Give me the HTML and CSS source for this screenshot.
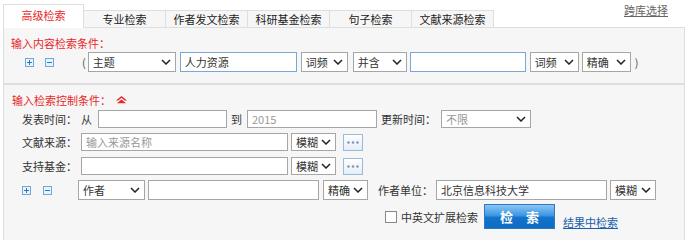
FILE: index.html
```html
<!DOCTYPE html>
<html lang="zh">
<head>
<meta charset="utf-8">
<link rel="stylesheet" href="styles.css">
</head>
<body>
<div class="page">
  <div class="tabbar">
    <div class="tabs">
      <div class="tab active">高级检索</div>
      <div class="tab">专业检索</div>
      <div class="tab">作者发文检索</div>
      <div class="tab">科研基金检索</div>
      <div class="tab">句子检索</div>
      <div class="tab">文献来源检索</div>
    </div>
    <a class="crossdb">跨库选择</a>
  </div>

  <div class="panel p1">
    <div class="title">输入内容检索条件：</div>
    <div class="row r-content">
      <span class="ico plus m25"><svg width="9" height="9" viewBox="0 0 9 9"><path d="M2 4.5h5M4.5 2v5" stroke="#2a79c4" stroke-width="1"/></svg></span>
      <span class="ico minus m11"><svg width="9" height="9" viewBox="0 0 9 9"><path d="M2 4.5h5" stroke="#2a79c4" stroke-width="1"/></svg></span>
      <span class="paren m28">(</span>
      <div class="sel w88 m2 h20"><span>主题</span><svg class="chev" width="10" height="6" viewBox="0 0 10 6"><path d="M1 1l4 4 4-4" fill="none" stroke="#222" stroke-width="1.5"/></svg></div>
      <div class="inp blue w117 m4 h20">人力资源</div>
      <div class="sel w47 m4 h20"><span>词频</span><svg class="chev" width="10" height="6" viewBox="0 0 10 6"><path d="M1 1l4 4 4-4" fill="none" stroke="#222" stroke-width="1.5"/></svg></div>
      <div class="sel w54 m5 h20"><span>并含</span><svg class="chev" width="10" height="6" viewBox="0 0 10 6"><path d="M1 1l4 4 4-4" fill="none" stroke="#222" stroke-width="1.5"/></svg></div>
      <div class="inp blue w116 m3 h20"></div>
      <div class="sel w49 m4 h20"><span>词频</span><svg class="chev" width="10" height="6" viewBox="0 0 10 6"><path d="M1 1l4 4 4-4" fill="none" stroke="#222" stroke-width="1.5"/></svg></div>
      <div class="sel w49 m3 h20"><span>精确</span><svg class="chev" width="10" height="6" viewBox="0 0 10 6"><path d="M1 1l4 4 4-4" fill="none" stroke="#222" stroke-width="1.5"/></svg></div>
      <span class="paren m4">)</span>
    </div>
  </div>

  <div class="panel p2">
    <div class="title t2">输入检索控制条件：<svg class="up" width="11" height="8" viewBox="0 0 11 8"><path d="M5.5 0L11 4.5H8.6L5.5 1.8 2.4 4.5H0z" fill="#e8262a"/><path d="M5.5 3.4L10 7.2H1z" fill="#e8262a"/></svg></div>

    <div class="row r-time">
      <span class="lbl">发表时间：</span>
      <span class="txt">从</span>
      <div class="inp w129 m6 h18"></div>
      <span class="txt m4">到</span>
      <div class="inp w130 m5 h18 gray">2015</div>
      <span class="txt m4">更新时间：</span>
      <div class="sel w90 m5 h18"><span class="gray">不限</span><svg class="chev" width="10" height="6" viewBox="0 0 10 6"><path d="M1 1l4 4 4-4" fill="none" stroke="#222" stroke-width="1.5"/></svg></div>
    </div>

    <div class="row r-src">
      <span class="lbl">文献来源：</span>
      <div class="inp w207 h18 gray">输入来源名称</div>
      <div class="sel w45 m3 h18"><span>模糊</span><svg class="chev" width="10" height="6" viewBox="0 0 10 6"><path d="M1 1l4 4 4-4" fill="none" stroke="#222" stroke-width="1.5"/></svg></div>
      <div class="dots m7"><svg width="12" height="3" viewBox="0 0 12 3"><circle cx="1.5" cy="1.5" r="1.2" fill="#7d97b3"/><circle cx="6" cy="1.5" r="1.2" fill="#7d97b3"/><circle cx="10.5" cy="1.5" r="1.2" fill="#7d97b3"/></svg></div>
    </div>

    <div class="row r-fund">
      <span class="lbl">支持基金：</span>
      <div class="inp w207 h18"></div>
      <div class="sel w45 m3 h18"><span>模糊</span><svg class="chev" width="10" height="6" viewBox="0 0 10 6"><path d="M1 1l4 4 4-4" fill="none" stroke="#222" stroke-width="1.5"/></svg></div>
      <div class="dots m7"><svg width="12" height="3" viewBox="0 0 12 3"><circle cx="1.5" cy="1.5" r="1.2" fill="#7d97b3"/><circle cx="6" cy="1.5" r="1.2" fill="#7d97b3"/><circle cx="10.5" cy="1.5" r="1.2" fill="#7d97b3"/></svg></div>
    </div>

    <div class="row r-author">
      <span class="ico plus"><svg width="9" height="9" viewBox="0 0 9 9"><path d="M2 4.5h5M4.5 2v5" stroke="#2a79c4" stroke-width="1"/></svg></span>
      <span class="ico minus m12"><svg width="9" height="9" viewBox="0 0 9 9"><path d="M2 4.5h5" stroke="#2a79c4" stroke-width="1"/></svg></span>
      <div class="sel w67 m26 h20"><span>作者</span><svg class="chev" width="10" height="6" viewBox="0 0 10 6"><path d="M1 1l4 4 4-4" fill="none" stroke="#222" stroke-width="1.5"/></svg></div>
      <div class="inp w171 m3 h20"></div>
      <div class="sel w45 m4 h20"><span>精确</span><svg class="chev" width="10" height="6" viewBox="0 0 10 6"><path d="M1 1l4 4 4-4" fill="none" stroke="#222" stroke-width="1.5"/></svg></div>
      <span class="txt m10">作者单位：</span>
      <div class="inp w171 m3 h20">北京信息科技大学</div>
      <div class="sel w46 m3 h20"><span>模糊</span><svg class="chev" width="10" height="6" viewBox="0 0 10 6"><path d="M1 1l4 4 4-4" fill="none" stroke="#222" stroke-width="1.5"/></svg></div>
    </div>

    <div class="row r-submit">
      <span class="chk"></span>
      <span class="txt m4">中英文扩展检索</span>
      <button class="btn">检 索</button>
      <a class="link">结果中检索</a>
    </div>
  </div>
</div>
</body>
</html>
```

FILE: styles.css
```css
* { box-sizing: border-box; }
html, body { margin: 0; padding: 0; background: #fff; }
body {
  width: 686px;
  height: 240px;
  overflow: hidden;
  font-family: "Noto Sans CJK SC", "Microsoft YaHei", sans-serif;
  font-size: 11px;
  color: #333;
}
.page { width: 686px; }

.tabbar {
  height: 27px;
  display: flex;
  justify-content: space-between;
  align-items: flex-start;
  padding-left: 3px;
}
.tabs { display: flex; align-items: flex-end; height: 27px; }
.tab {
  width: 82px;
  height: 17px;
  border: 1px solid #dedede;
  border-bottom: none;
  border-left: none;
  background: #f6f6f6;
  text-align: center;
  line-height: 17px;
  color: #222;
  white-space: nowrap;
}
.tab.active {
  width: 81px;
  height: 24px;
  border-left: 1px solid #dedede;
  background: #fff;
  color: #e8262a;
  line-height: 20px;
  position: relative;
  top: 1px;
  margin-top: -1px;
}
.crossdb {
  margin-top: 2px;
  margin-right: 18px;
  color: #666;
  text-decoration: underline;
  line-height: 16px;
}

.panel {
  margin-left: 3px;
  margin-right: 1px;
  background: #f6f6f6;
  border: 1px solid #dedede;
}
.p1 { height: 57px; }
.p2 { height: 160px; border-bottom: none; }

.title {
  color: #e8262a;
  line-height: 16px;
  padding-left: 7px;
  padding-top: 7px;
  display: flex;
  align-items: center;
  white-space: nowrap;
}
.t2 { padding-top: 7px; padding-left: 8px; }
.up { margin-left: 5px; }

.row { display: flex; align-items: center; }
.row > * { flex: none; }
.r-content { margin-top: 1px; height: 20px; }
.r-time { margin-top: 2px; height: 18px; padding-left: 18px; }
.r-src { margin-top: 5px; height: 18px; padding-left: 18px; }
.r-fund { margin-top: 6px; height: 18px; padding-left: 18px; }
.r-author { margin-top: 5px; height: 20px; padding-left: 18px; }
.r-submit { margin-top: 4px; height: 25px; padding-left: 381px; }

.lbl { width: 59px; line-height: 16px; white-space: nowrap; }
.txt { line-height: 16px; white-space: nowrap; }
.paren { color: #555; line-height: 16px; }

.ico {
  width: 9px; height: 9px;
  border: 1px solid #6fa8dc;
  background: #eaf3fc;
  display: flex; align-items: center; justify-content: center;
}
.ico svg { display: block; margin: -1px; }

.sel, .inp {
  background: #fff;
  border: 1px solid #a6a6a6;
  display: flex;
  align-items: center;
  padding-left: 4px;
  color: #333;
  white-space: nowrap;
  overflow: hidden;
}
.sel { justify-content: space-between; padding-right: 4px; }
.chev { flex: none; }
.inp.blue { border-color: #7aa7da; }
.gray { color: #999; }

.h18 { height: 18px; }
.h20 { height: 20px; }

.dots {
  width: 20px; height: 17px;
  border: 1px solid #9bbad8;
  background: linear-gradient(#fdfeff, #e4edf6);
  display: flex; align-items: center; justify-content: center;
}

.chk {
  width: 12px; height: 12px;
  border: 1px solid #888;
  background: #fff;
}
.btn {
  margin-left: 6px;
  width: 71px; height: 25px;
  border: 1px solid #2f79c4;
  background: linear-gradient(#8cc6f2 0%, #3c97e2 45%, #1173cc 55%, #0e6cc3 100%);
  color: #fff;
  font-family: inherit;
  font-size: 13px;
  font-weight: bold;
  letter-spacing: 5px;
  padding: 0 0 0 5px;
  line-height: 22px;
}
.link {
  margin-left: 8px;
  margin-top: 11px;
  color: #1a5eab;
  text-decoration: underline;
  line-height: 16px;
}

.w45 { width: 45px; } .w46 { width: 46px; } .w47 { width: 47px; } .w49 { width: 49px; }
.w54 { width: 54px; } .w67 { width: 67px; } .w88 { width: 88px; } .w90 { width: 90px; }
.w116 { width: 116px; } .w117 { width: 117px; } .w129 { width: 129px; } .w130 { width: 130px; }
.w171 { width: 171px; } .w207 { width: 207px; }

.m2 { margin-left: 2px; } .m3 { margin-left: 3px; } .m4 { margin-left: 4px; }
.m5 { margin-left: 5px; } .m6 { margin-left: 6px; } .m7 { margin-left: 7px; } .m8 { margin-left: 8px; }
.m10 { margin-left: 10px; } .m11 { margin-left: 11px; } .m12 { margin-left: 12px; }
.m25 { margin-left: 21px; } .m26 { margin-left: 26px; } .m28 { margin-left: 28px; }
```
